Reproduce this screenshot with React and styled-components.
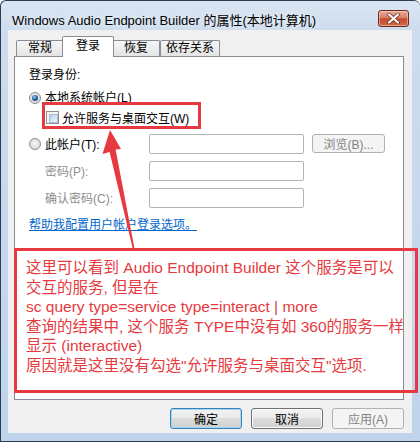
import React from 'react';
import styled, { createGlobalStyle } from 'styled-components';

const FONT = `"Liberation Sans", "Noto Sans CJK SC", sans-serif`;
const RED = '#e63a40';

const Global = createGlobalStyle`
  html, body { margin: 0; padding: 0; background: #ffffff; }
  body { width: 420px; height: 442px; overflow: hidden; }
  * { box-sizing: border-box; }
`;

const Window = styled.div`
  position: relative;
  width: 420px;
  height: 442px;
  border: 1px solid #2b3d52;
  border-right: none;
  border-radius: 6px 6px 0 0;
  background: linear-gradient(to bottom, #dae6f3 0px, #cddcee 30px, #bfd4ec 100%);
  padding: 0 8px 8px 7px;
  display: flex;
  flex-direction: column;
  font-family: ${FONT};
  overflow: hidden;
`;

const TitleBar = styled.div`
  height: 29px;
  display: flex;
  align-items: center;
  padding: 6px 3px 0 4px;
`;

const TitleText = styled.div`
  font-size: 13px;
  color: #000;
  white-space: nowrap;
  padding-top: 1px;
  text-shadow: 0 0 6px rgba(255, 255, 255, 0.9);
`;

const CloseButton = styled.div`
  margin-left: auto;
  width: 31px;
  height: 17px;
  border: 1px solid #6f2a1d;
  border-radius: 3px;
  background: linear-gradient(to bottom, #e9ab9b 0%, #d77f66 45%, #c44b2e 52%, #cf6a4a 100%);
  box-shadow: inset 0 0 0 1px rgba(255, 220, 210, 0.5);
  display: flex;
  align-items: center;
  justify-content: center;
`;

const Client = styled.div`
  flex: 1;
  background: #f0f0f0;
  display: flex;
  flex-direction: column;
  padding-top: 6px;
`;

const TabStrip = styled.div`
  display: flex;
  align-items: flex-end;
  height: 20px;
  padding-left: 8px;
`;

const Tab = styled.div`
  position: relative;
  min-width: ${p => (p.$active ? '52px' : '48px')};
  height: ${p => (p.$active ? '21px' : '16px')};
  margin: ${p => (p.$active ? '0 -2px -1px -2px' : '0')};
  z-index: ${p => (p.$active ? 2 : 1)};
  padding: ${p => (p.$active ? '1px 7px 0' : '0 5px')};
  border: 1px solid #898c95;
  border-bottom: none;
  border-radius: 2px 2px 0 0;
  background: ${p => (p.$active ? '#ffffff' : 'linear-gradient(to bottom, #f6f6f6, #e4e4e4)')};
  font-size: 12px;
  line-height: ${p => (p.$active ? '16px' : '15px')};
  text-align: center;
  color: #000;
  white-space: nowrap;
`;

const Panel = styled.div`
  position: relative;
  height: 344px;
  margin: 0 8px 0 6px;
  border: 1px solid #898c95;
  background: #ffffff;
  padding: 11px 14px 0 14px;
  display: flex;
  flex-direction: column;
  align-items: flex-start;
  font-size: 12px;
  color: #000;
`;

const Heading = styled.div`
  line-height: 14px;
  height: 14px;
`;

const OptionRow = styled.div`
  display: flex;
  align-items: center;
  gap: 4px;
  height: 12px;
  line-height: 12px;
  margin-top: ${p => p.$mt || 0}px;
  white-space: nowrap;
`;

const Radio = styled.span`
  flex: none;
  width: 12px;
  height: 12px;
  border-radius: 50%;
  border: 1px solid #8b8d8f;
  background: radial-gradient(circle at 50% 45%, #f6f6f6 0%, #e2e2e2 55%, #c9c9c9 100%);
  display: inline-flex;
  align-items: center;
  justify-content: center;
  &::after {
    content: '';
    display: ${p => (p.$checked ? 'block' : 'none')};
    width: 6px;
    height: 6px;
    border-radius: 50%;
    background: radial-gradient(circle at 40% 35%, #9fd0ff 0%, #2b67a3 45%, #0c2a4d 100%);
  }
`;

const Highlight = styled.div`
  margin: -2px 0 0 13px;
  border: 3px solid ${RED};
  padding: 5px 9px 2px 1px;
`;

const CheckRow = styled.div`
  display: flex;
  align-items: center;
  gap: 3px;
  height: 14px;
  white-space: nowrap;
`;

const CheckBox = styled.span`
  flex: none;
  width: 13px;
  height: 13px;
  border: 1px solid #8e8f8f;
  background: #f5f5f5;
  padding: 2px;
  &::after {
    content: '';
    display: block;
    width: 100%;
    height: 100%;
    background: linear-gradient(135deg, #b6cce6 0%, #dbe7f5 60%, #f3f7fc 100%);
    border: 1px solid #a9bbd2;
  }
`;

const FormGrid = styled.div`
  margin-top: 4px;
  display: grid;
  grid-template-columns: 112px 155px 73px;
  grid-auto-rows: 21px;
  column-gap: 8px;
  row-gap: 6px;
  align-items: center;
`;

const FieldLabel = styled.div`
  display: flex;
  align-items: center;
  gap: 4px;
  padding-left: ${p => (p.$indent ? 16 : 0)}px;
  color: ${p => (p.$disabled ? '#8d8d8d' : '#000')};
  white-space: nowrap;
`;

const TextBox = styled.div`
  width: 155px;
  height: 20px;
  border: 1px solid #b0b4b8;
  border-radius: 2px;
  background: #ffffff;
`;

const Button = styled.div`
  width: ${p => p.$w || 72}px;
  height: ${p => p.$h || 21}px;
  border: 1px solid ${p => (p.$disabled ? '#adb2b5' : p.$default ? '#3c7fb1' : '#707070')};
  border-radius: 3px;
  background: ${p =>
    p.$disabled
      ? '#f4f4f4'
      : 'linear-gradient(to bottom, #f2f2f2 0%, #ebebeb 50%, #dddddd 50%, #cfcfcf 100%)'};
  box-shadow: ${p =>
    p.$disabled ? 'none' : p.$default ? 'inset 0 0 0 1px #9ddcf7' : 'inset 0 0 0 1px #fbfbfb'};
  color: ${p => (p.$disabled ? '#838383' : '#000')};
  font-size: 12px;
  display: flex;
  align-items: center;
  justify-content: center;
  white-space: nowrap;
`;

const HelpLink = styled.div`
  margin-top: 10px;
  line-height: 14px;
  color: #0066cc;
  text-decoration: underline;
  white-space: nowrap;
`;

const ButtonRow = styled.div`
  display: flex;
  justify-content: flex-end;
  gap: 9px;
  padding: 8px 8px 0 0;
`;

const Annotation = styled.div`
  position: absolute;
  left: 13px;
  top: 247px;
  width: 404px;
  height: 145px;
  border: 3px solid ${RED};
  padding: 7px 0 0 9px;
  color: ${RED};
  font-family: ${FONT};
  font-size: 15.5px;
  line-height: 19.5px;
  white-space: pre;
  z-index: 5;
`;

const Overlay = styled.svg`
  position: absolute;
  left: 0;
  top: 0;
  width: 420px;
  height: 442px;
  pointer-events: none;
  z-index: 6;
`;

const lines = [
  '这里可以看到 Audio Endpoint Builder 这个服务是可以',
  '交互的服务, 但是在',
  'sc query type=service type=interact | more',
  '查询的结果中, 这个服务 TYPE中没有如 360的服务一样',
  '显示 (interactive)',
  '原因就是这里没有勾选"允许服务与桌面交互"选项.',
];

export default function App() {
  return (
    <>
      <Global />
      <Window>
        <TitleBar>
          <TitleText>Windows Audio Endpoint Builder 的属性(本地计算机)</TitleText>
          <CloseButton>
            <svg width="13" height="11" viewBox="0 0 13 11">
              <path d="M2 1.5 L11 9.5 M11 1.5 L2 9.5" stroke="#6b2a1f" strokeWidth="3.6" strokeLinecap="round" />
              <path d="M2 1.5 L11 9.5 M11 1.5 L2 9.5" stroke="#ffffff" strokeWidth="2.2" strokeLinecap="round" />
            </svg>
          </CloseButton>
        </TitleBar>
        <Client>
          <TabStrip>
            <Tab>常规</Tab>
            <Tab $active>登录</Tab>
            <Tab>恢复</Tab>
            <Tab>依存关系</Tab>
          </TabStrip>
          <Panel>
            <Heading>登录身份:</Heading>
            <OptionRow $mt={10}>
              <Radio $checked />
              <span>本地系统帐户(L)</span>
            </OptionRow>
            <Highlight>
              <CheckRow>
                <CheckBox />
                <span>允许服务与桌面交互(W)</span>
              </CheckRow>
            </Highlight>
            <FormGrid>
              <FieldLabel>
                <Radio />
                <span>此帐户(T):</span>
              </FieldLabel>
              <TextBox />
              <Button $disabled $w={73} $h={19}>浏览(B)...</Button>
              <FieldLabel $indent $disabled>密码(P):</FieldLabel>
              <TextBox />
              <span />
              <FieldLabel $indent $disabled>确认密码(C):</FieldLabel>
              <TextBox />
              <span />
            </FormGrid>
            <HelpLink>帮助我配置用户帐户登录选项。</HelpLink>
          </Panel>
          <ButtonRow>
            <Button $default>确定</Button>
            <Button>取消</Button>
            <Button $disabled>应用(A)</Button>
          </ButtonRow>
        </Client>
        <Annotation>{lines.join('\n')}</Annotation>
        <Overlay viewBox="0 0 420 442">
          <polygon
            points="109,129 120,148 114.6,148.6 133.4,247 131.6,247 108.6,151 101.5,153"
            fill={RED}
          />
        </Overlay>
      </Window>
    </>
  );
}
